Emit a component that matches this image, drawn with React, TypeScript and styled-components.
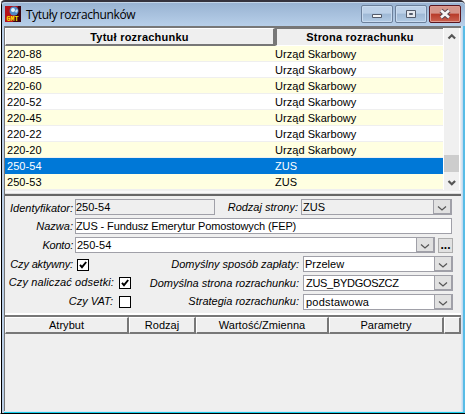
import React, {useState} from 'react';
import styled, {createGlobalStyle} from 'styled-components';

const GlobalStyle = createGlobalStyle`
    * { box-sizing: border-box; }
    body {
        margin: 0;
        background: #fff;
        overflow: hidden;
    }
`;

const AppWindow = styled.div`
    width: 465px;
    height: 414px;
    display: flex;
    flex-direction: column;
    padding: 0 0 0 3px;
    border-top: 2px solid #35323c;
    border-left: 1px solid #fff;
    border-bottom: 1px solid #000;
    border-radius: 5px 5px 0 0;
    background: linear-gradient(90deg, #000 0 1px, #b9cde5 1px);
    font: 11px 'Liberation Sans', Arial, sans-serif;
    color: #000;
    white-space: nowrap;
`;

const TitleBar = styled.header`
    flex: 0 0 24px;
    display: flex;
    align-items: flex-start;
    margin-left: -2px;
    padding: 3px 4px 0 3px;
    background: linear-gradient(#99b3d2, #b7cfe9);
    border-top: 1px solid #c3d5e8;
    border-radius: 4px 4px 0 0;
`;

const Title = styled.h1`
    flex: 1;
    margin: 1px 0 0 5px;
    font: 12px/16px 'Open Sans', sans-serif;
    letter-spacing: -0.38px;
`;

const WindowButton = styled.button<{$close?: boolean}>`
    width: 32px;
    height: 18px;
    margin: -1px 0 0 2px;
    padding: 0;
    border: 1px solid ${p => p.$close ? '#5a1720' : '#6c809b'};
    border-radius: 2px;
    box-shadow: inset 0 0 0 1px ${p => p.$close ? '#df9a90' : '#c9dbef'};
    background: ${p => p.$close
        ? 'linear-gradient(#d5958a 0 45%, #b73b29 50%, #cb6250)'
        : 'linear-gradient(#bdd1e8 0 45%, #9eb8d5 50%, #b2cbe4)'};
    svg { display: block; }
`;

const Client = styled.main`
    flex: 1;
    margin: 0 2px 1px 0;
    border-left: 1px solid #777;
    background: #efefef;
    display: flex;
    flex-direction: column;
`;

const Frame = styled.div`
    flex: 1;
    display: flex;
    background: linear-gradient(90deg, #d9e6f2 0 458px, #c3daf0 458px);
    border-right: 2px solid #58bce6;
    border-bottom: 1px solid #19cde9;
`;

const LedgerPanel = styled.section`
    height: 168px;
    display: flex;
    flex-direction: column;
    border-top: 2px solid #777;
    box-shadow: inset 0 -1px #ddd, inset 0 -3px #f8f8f8;
`;

const LedgerHeader = styled.div`
    display: grid;
    grid-template-columns: 270px 168px;
    height: 18px;
    width: 438px;
    font-weight: bold;
`;

const HeaderCell = styled.div<{$pressed?: boolean; $spacing?: number}>`
    display: flex;
    align-items: center;
    justify-content: center;
    background: #efefef;
    letter-spacing: ${p => p.$spacing ?? 0.05}px;
    border-style: solid;
    border-width: ${p => p.$pressed ? '1px 0 1px 2px' : '1px 2px 2px 1px'};
    border-color: ${p => p.$pressed ? '#777 #fff #fff #777' : '#fff #777 #777 #fff'};
`;

const LedgerBody = styled.div`
    display: flex;
`;

const LedgerRows = styled.div`
    width: 438px;
`;

const LedgerRow = styled.div<{$striped: boolean; $selected: boolean}>`
    display: grid;
    grid-template-columns: 268px 1fr;
    height: 16px;
    padding: 0 0 0 2px;
    line-height: 16px;
    letter-spacing: 0.05px;
    border-bottom: 1px solid ${p => p.$selected ? '#0078d7' : '#efefef'};
    background: ${p => p.$selected ? '#0078d7' : p.$striped ? '#ffffe1' : '#fff'};
    color: ${p => p.$selected ? '#fff' : '#000'};
`;

const ScrollBar = styled.div`
    width: 17px;
    height: 162px;
    margin-top: -18px;
    display: flex;
    flex-direction: column;
    align-items: center;
    background: #f0f0f0;
    border-left: 1px solid #fff;
    border-right: 1px solid #fff;
`;

const ScrollThumb = styled.div`
    width: 15px;
    height: 17px;
    margin: auto 0 4px;
    background: #cdcdcd;
`;

const FormPanel = styled.section`
    height: 121px;
    display: flex;
    flex-direction: column;
    border-top: 2px solid #666;
    border-bottom: 2px solid #fff;
    padding-top: 3px;
`;

const FormRow = styled.div`
    display: flex;
    height: 16px;
    flex: 0 0 16px;
    margin-bottom: 3px;
`;

const Label = styled.label<{$width: number; $spacing?: number; $line?: number}>`
    width: ${p => p.$width}px;
    text-align: right;
    font-style: italic;
    line-height: ${p => p.$line ?? 16}px;
    letter-spacing: ${p => p.$spacing ?? 0}px;
`;

const Field = styled.div<{
    $width: number; $left?: number; $pad?: number; $disabled?: boolean; $spacing?: number
}>`
    width: ${p => p.$width}px;
    height: 16px;
    margin-left: ${p => p.$left ?? 2}px;
    display: flex;
    justify-content: space-between;
    padding-left: ${p => p.$pad ?? 0}px;
    border: 1px solid #a0a0a8;
    background: ${p => p.$disabled ? '#efefef' : '#fff'};
    line-height: 14px;
    letter-spacing: ${p => p.$spacing ?? 0}px;
`;

const DropButton = styled.span`
    width: 18px;
    height: 14px;
    border: 1px solid #a0a0a8;
    border-top: 0;
    background: #e1e1e1;
    svg { display: block; }
`;

const MoreButton = styled.button`
    width: 15px;
    height: 15px;
    margin: 1px 0 0 3px;
    padding: 0;
    border: 1px solid #adadad;
    background: #e1e1e1;
    font: bold 12px/9px 'Liberation Sans', Arial, sans-serif;
`;

const CheckBox = styled.span<{$left: number; $top: number}>`
    width: 12px;
    height: 12px;
    margin: ${p => p.$top}px 0 0 ${p => p.$left}px;
    border: 1px solid #000;
    background: #fff;
    svg { display: block; }
`;

const AttributeHeader = styled.div`
    display: grid;
    grid-template-columns: 124px 67px 133px 115px 17px;
    width: 456px;
    height: 19px;
    border-top: 2px solid #777;
`;

const AttributeBody = styled.section`
    flex: 1;
`;

const rows = [
    ['220-88', 'Urząd Skarbowy'],
    ['220-85', 'Urząd Skarbowy'],
    ['220-60', 'Urząd Skarbowy'],
    ['220-52', 'Urząd Skarbowy'],
    ['220-45', 'Urząd Skarbowy'],
    ['220-22', 'Urząd Skarbowy'],
    ['220-20', 'Urząd Skarbowy'],
    ['250-54', 'ZUS'],
    ['250-53', 'ZUS'],
];

function AppIcon() {
    return (
        <svg width="16" height="16" viewBox="0 0 16 16">
            <path fill="#b5121b" d="M0 0h16v16H0z"/>
            <path fill="#3b0612" d="M13 0h3v16H8z"/>
            <circle cx="9" cy="5" r="4.500" fill="#4f88c4"/>
            <circle cx="8" cy="4" r="2" fill="#e8f5ff"/>
            <path fill="#c3e0f4" d="M10 5l2-2 1 2-2 2z"/>
            <text x="1.500" y="14.500" textLength="12" lengthAdjust="spacingAndGlyphs" fill="#ffe700"
                fontSize="6.500" fontWeight="bold" fontFamily="Liberation Mono, monospace">GMT</text>
        </svg>
    );
}

function Chevron() {
    return (
        <svg width="16" height="14" viewBox="0 0 16 14">
            <path d="M4 6.500l4 3.500 4-3.500" fill="none" stroke="#555" strokeWidth="1.200"/>
        </svg>
    );
}

function ScrollArrow({up}: {up?: boolean}) {
    return (
        <svg width="15" height="14" viewBox="0 0 15 14">
            <path d={up ? 'M4.500 10.500l3.300-3.300 3.300 3.300' : 'M4.500 5l3.300 3.300 3.300-3.300'}
                fill="none" stroke="#555" strokeWidth="2.200"/>
        </svg>
    );
}

type SelectProps = {
    value: string;
    width: number;
    left?: number;
    pad?: number;
    disabled?: boolean;
    spacing?: number;
}

function Select({value, width, left, pad, disabled, spacing}: SelectProps) {
    return (
        <Field $width={width} $left={left} $pad={pad} $disabled={disabled} $spacing={spacing}>
            {value}
            <DropButton><Chevron/></DropButton>
        </Field>
    );
}

function Check({checked, left, top = 2}: {checked?: boolean; left: number; top?: number}) {
    return (
        <CheckBox $left={left} $top={top}>
            {checked &&
                <svg width="10" height="10" viewBox="0 0 10 10">
                    <path d="M2 4.800l2 2.400 4.200-5.200" fill="none" stroke="#000" strokeWidth="1.900"/>
                </svg>
            }
        </CheckBox>
    );
}

function App() {
    const [selected, setSelected] = useState('250-54');

    return (
        <AppWindow>
            <GlobalStyle/>
            <TitleBar>
                <AppIcon/>
                <Title>Tytuły rozrachunków</Title>
                <WindowButton>
                    <svg width="30" height="16"><path d="M10.500 8.500h9v3h-9z" fill="#f5f5f5" stroke="#535b6b"/></svg>
                </WindowButton>
                <WindowButton>
                    <svg width="30" height="16">
                        <path d="M10.500 4.500h9v7h-9z" fill="#e6e9ef" stroke="#535b6b"/>
                        <path d="M13.500 7.500h3v1h-3z" fill="#b6cbe2" stroke="#535b6b"/>
                    </svg>
                </WindowButton>
                <WindowButton $close>
                    <svg width="30" height="16">
                        <path d="M11 4.500l8 7M19 4.500l-8 7" stroke="#59444e" strokeWidth="4.600"/>
                        <path d="M11 4.500l8 7M19 4.500l-8 7" stroke="#f5f5f5" strokeWidth="2.600"/>
                    </svg>
                </WindowButton>
            </TitleBar>
            <Frame>
                <Client>
                    <LedgerPanel>
                        <LedgerHeader>
                            <HeaderCell $spacing={0.24}>Tytuł rozrachunku</HeaderCell>
                            <HeaderCell $pressed $spacing={0.2}>Strona rozrachunku</HeaderCell>
                        </LedgerHeader>
                        <LedgerBody>
                            <LedgerRows>
                                {rows.map(([id, side], i) =>
                                    <LedgerRow
                                        key={id}
                                        onClick={() => setSelected(id)}
                                        $striped={i % 2 === 0}
                                        $selected={id === selected}>
                                        <span>{id}</span>
                                        <span>{side}</span>
                                    </LedgerRow>)
                                }
                            </LedgerRows>
                            <ScrollBar>
                                <ScrollArrow up/>
                                <ScrollThumb/>
                                <ScrollArrow/>
                            </ScrollBar>
                        </LedgerBody>
                    </LedgerPanel>
                    <FormPanel>
                        <FormRow>
                            <Label $width={68} $line={18}>Identyfikator:</Label>
                            <Field $width={140} $disabled>250-54</Field>
                            <Label $width={83}>Rodzaj strony:</Label>
                            <Select value="ZUS" width={151} left={3} pad={1} disabled/>
                        </FormRow>
                        <FormRow>
                            <Label $width={68}>Nazwa:</Label>
                            <Field $width={377} $spacing={-0.12}>ZUS - Fundusz Emerytur Pomostowych (FEP)</Field>
                        </FormRow>
                        <FormRow>
                            <Label $width={68} $spacing={-0.2}>Konto:</Label>
                            <Select value="250-54" width={360} pad={1}/>
                            <MoreButton>...</MoreButton>
                        </FormRow>
                        <FormRow>
                            <Label $width={68} $spacing={-0.18}>Czy aktywny:</Label>
                            <Check checked left={4} top={3}/>
                            <Label $width={210}>Domyślny sposób zapłaty:</Label>
                            <Select value="Przelew" width={150} left={4} pad={1}/>
                        </FormRow>
                        <FormRow>
                            <Label $width={109} $line={14} $spacing={0.12}>Czy naliczać odsetki:</Label>
                            <Check checked left={5}/>
                            <Label $width={168}>Domyślna strona rozrachunku:</Label>
                            <Select value="ZUS_BYDGOSZCZ" width={150} left={4} pad={2} spacing={-0.3}/>
                        </FormRow>
                        <FormRow>
                            <Label $width={108} $line={14}>Czy VAT:</Label>
                            <Check left={6}/>
                            <Label $width={168} $line={15}>Strategia rozrachunku:</Label>
                            <Select value="podstawowa" width={150} left={4} pad={2} spacing={0.2}/>
                        </FormRow>
                    </FormPanel>
                    <AttributeHeader>
                        <HeaderCell>Atrybut</HeaderCell>
                        <HeaderCell>Rodzaj</HeaderCell>
                        <HeaderCell>Wartość/Zmienna</HeaderCell>
                        <HeaderCell>Parametry</HeaderCell>
                        <HeaderCell/>
                    </AttributeHeader>
                    <AttributeBody/>
                </Client>
            </Frame>
        </AppWindow>
    );
}

export default App;
